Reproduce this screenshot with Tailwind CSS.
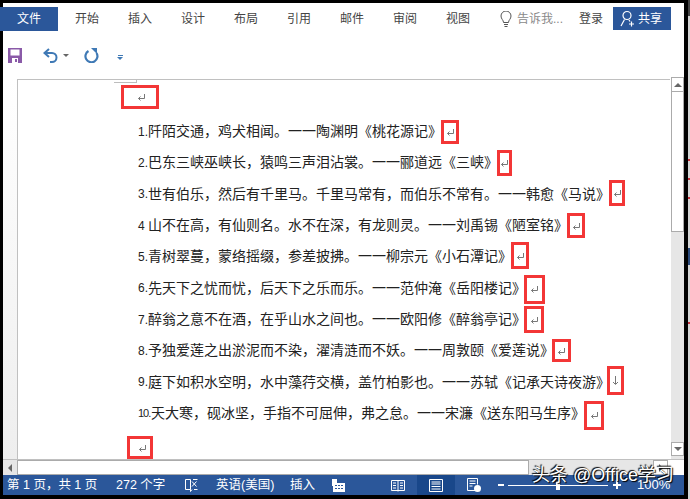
<!DOCTYPE html>
<html lang="zh-CN">
<head>
  <meta charset="UTF-8" />
  <title>文档 - Word</title>
  <script src="https://cdn.jsdelivr.net/npm/@tailwindcss/browser@4"></script>
</head>
<body class="bg-black w-[690px] h-[499px] overflow-hidden font-['Liberation_Sans','Noto_Sans_CJK_SC',sans-serif]">
  <div class="flex justify-between">
  <div class="relative ml-[3px] mt-[3px] w-[681px] h-[492px] bg-white flex flex-col">

    <!-- tabs -->
    <div class="h-[28px] pt-[4px] flex items-stretch text-[12px] text-[#444]">
      <div class="-ml-[3px] w-[58px] h-[24px] bg-[#2b579a] text-white flex items-center justify-center">文件</div>
      <div class="ml-[3px] w-[53px] pl-[14px] flex items-center">开始</div>
      <div class="w-[53px] pl-[14px] flex items-center">插入</div>
      <div class="w-[53px] pl-[14px] flex items-center">设计</div>
      <div class="w-[53px] pl-[14px] flex items-center">布局</div>
      <div class="w-[53px] pl-[14px] flex items-center">引用</div>
      <div class="w-[53px] pl-[14px] flex items-center">邮件</div>
      <div class="w-[53px] pl-[14px] flex items-center">审阅</div>
      <div class="w-[53px] pl-[14px] flex items-center">视图</div>
      <div class="ml-[15px] flex items-center w-[79px]">
        <svg width="12" height="17" viewBox="0 0 12 17" fill="none" stroke="#555" stroke-width="1"><path d="M3.500 11.500C3.500 9 1 8 1 5a5 5 0 0 1 10 0c0 3-2.500 4-2.500 6.500z"/><path d="M4 13.500h4M4.500 15.500h3"/></svg>
        <span class="ml-[5px] text-[#8a8a8a] whitespace-nowrap">告诉我...</span>
      </div>
      <div class="w-[34px] flex items-center whitespace-nowrap">登录</div>
      <div class="w-[58px] h-[23px] bg-[#2b579a] text-white flex items-center pl-[7px] gap-[3px]">
        <svg width="15" height="17" viewBox="0 0 15 17" fill="none" stroke="#fff" stroke-width="1.200"><circle cx="7" cy="5.500" r="4"/><path d="M4.500 9.500 1 16M9 10l1 1.500M9 14h5M11.500 11.500v5"/></svg>
        <span>共享</span>
      </div>
    </div>

    <!-- quick access -->
    <div class="h-[48px] flex items-center pt-[1px]">
      <svg class="ml-[5px]" width="14" height="15" viewBox="0 0 14 15"><path fill="#8a5aa8" d="M0 0h14v15H0z"/><path fill="#fff" d="M2.500 1.500h9v6h-9zM4 10h6v5H4z"/><path fill="#8a5aa8" d="M7 11h2v3H7z"/></svg>
      <svg class="ml-[21px]" width="15" height="15" viewBox="0 0 15 15" fill="none" stroke="#3f79b5" stroke-width="2"><path d="M6 1 1.500 5 6 9"/><path d="M2 5h7a4.500 4.500 0 0 1 0 9H7"/></svg>
      <span class="ml-[5px] w-0 h-0 border-x-[3px] border-x-transparent border-t-[3px] border-t-[#666]"></span>
      <svg class="ml-[15px]" width="15" height="15" viewBox="0 0 15 15" fill="none" stroke="#3f79b5" stroke-width="2.200"><path d="M4.500 3a6 6 0 1 0 8 2"/><path fill="#3f79b5" stroke="none" d="M7 0h6v6z"/></svg>
      <span class="ml-[18px] flex flex-col items-center gap-[1px] mt-[4px]">
        <span class="w-[5px] h-px bg-[#3f79b5]"></span>
        <span class="w-0 h-0 border-x-[3px] border-x-transparent border-t-[3px] border-t-[#3f79b5]"></span>
      </span>
    </div>

    <!-- document + vertical scrollbar -->
    <div class="flex h-[380px]">
      <div class="w-[15px] bg-linear-to-b from-white to-[#eeeeee] border-r border-[#c0c0c0]"></div>
      <div class="relative w-[652px] border-t border-[#c0c0c0] bg-white">
        <div class="absolute left-[96px] top-0 w-[23px] h-[3px] border-b border-r border-[#bdbdbd]"></div>
        <div class="ml-[103px] mt-[5px] w-[38px] h-[24px] border-[3px] border-[#f33636] flex items-center justify-center"><svg class="mt-[2px] ml-[3px]" width="9" height="8" viewBox="0 0 9 8" fill="none" stroke="#777"><path d="M7.500 0v4.500H1.500M3.500 2.500 1.500 4.500l2 2"/></svg></div>

        <div class="mt-[7px] pl-[120px] text-[14px] text-[#222] flex flex-col">
          <div class="h-[31.33px] flex items-center whitespace-nowrap"><span class="w-[10px] text-[12px]">1.</span>阡陌交通，鸡犬相闻。一一陶渊明《桃花源记》<span class="-ml-[1px] w-[18px] h-[24px] border-[3px] border-[#f33636] flex items-center justify-center"><svg class="mt-[2px]" width="9" height="8" viewBox="0 0 9 8" fill="none" stroke="#777"><path d="M7.500 0v4.500H1.500M3.500 2.500 1.500 4.500l2 2"/></svg></span></div>
          <div class="h-[31.33px] flex items-center whitespace-nowrap"><span class="w-[10px] text-[12px]">2.</span>巴东三峡巫峡长，猿鸣三声泪沾裳。一一郦道远《三峡》<span class="-ml-[1px] w-[15px] h-[26px] border-[3px] border-[#f33636] flex items-center justify-center"><svg class="mt-[2px]" width="9" height="8" viewBox="0 0 9 8" fill="none" stroke="#777"><path d="M7.500 0v4.500H1.500M3.500 2.500 1.500 4.500l2 2"/></svg></span></div>
          <div class="h-[31.33px] flex items-center whitespace-nowrap"><span class="w-[10px] text-[12px]">3.</span>世有伯乐，然后有千里马。千里马常有，而伯乐不常有。一一韩愈《马说》<span class="-ml-[1px] mb-[2px] w-[16px] h-[26px] border-[3px] border-[#f33636] flex items-center justify-center"><svg class="mt-[2px]" width="9" height="8" viewBox="0 0 9 8" fill="none" stroke="#777"><path d="M7.500 0v4.500H1.500M3.500 2.500 1.500 4.500l2 2"/></svg></span></div>
          <div class="h-[31.33px] flex items-center whitespace-nowrap"><span class="w-[10px] text-[12px]">4</span>山不在高，有仙则名。水不在深，有龙则灵。一一刘禹锡《陋室铭》<span class="-ml-[1px] w-[18px] h-[25px] border-[3px] border-[#f33636] flex items-center justify-center"><svg class="mt-[2px]" width="9" height="8" viewBox="0 0 9 8" fill="none" stroke="#777"><path d="M7.500 0v4.500H1.500M3.500 2.500 1.500 4.500l2 2"/></svg></span></div>
          <div class="h-[31.33px] flex items-center whitespace-nowrap"><span class="w-[10px] text-[12px]">5.</span>青树翠蔓，蒙络摇缀，参差披拂。一一柳宗元《小石潭记》<span class="-ml-[1px] mb-[2px] w-[18px] h-[27px] border-[3px] border-[#f33636] flex items-center justify-center"><svg class="mt-[2px]" width="9" height="8" viewBox="0 0 9 8" fill="none" stroke="#777"><path d="M7.500 0v4.500H1.500M3.500 2.500 1.500 4.500l2 2"/></svg></span></div>
          <div class="h-[31.33px] flex items-center whitespace-nowrap"><span class="w-[10px] text-[12px]">6.</span>先天下之忧而忧，后天下之乐而乐。一一范仲淹《岳阳楼记》<span class="-ml-[2px] mt-[2px] w-[21px] h-[29px] border-[3px] border-[#f33636] flex items-center justify-center"><svg class="mt-[2px]" width="9" height="8" viewBox="0 0 9 8" fill="none" stroke="#777"><path d="M7.500 0v4.500H1.500M3.500 2.500 1.500 4.500l2 2"/></svg></span></div>
          <div class="h-[31.33px] flex items-center whitespace-nowrap"><span class="w-[10px] text-[12px]">7.</span>醉翁之意不在酒，在乎山水之间也。一一欧阳修《醉翁亭记》<span class="-ml-[2px] w-[20px] h-[27px] border-[3px] border-[#f33636] flex items-center justify-center"><svg class="mt-[2px]" width="9" height="8" viewBox="0 0 9 8" fill="none" stroke="#777"><path d="M7.500 0v4.500H1.500M3.500 2.500 1.500 4.500l2 2"/></svg></span></div>
          <div class="h-[31.33px] flex items-center whitespace-nowrap"><span class="w-[10px] text-[12px]">8.</span>予独爱莲之出淤泥而不染，濯清涟而不妖。一一周敦颐《爱莲说》<span class="-ml-[2px] w-[19px] h-[23px] border-[3px] border-[#f33636] flex items-center justify-center"><svg class="mt-[2px]" width="9" height="8" viewBox="0 0 9 8" fill="none" stroke="#777"><path d="M7.500 0v4.500H1.500M3.500 2.500 1.500 4.500l2 2"/></svg></span></div>
          <div class="h-[31.33px] flex items-center whitespace-nowrap"><span class="w-[10px] text-[12px]">9.</span>庭下如积水空明，水中藻荇交横，盖竹柏影也。一一苏轼《记承天诗夜游》<span class="-ml-[3px] mb-[3px] w-[17px] h-[29px] border-[3px] border-[#f33636] flex items-center justify-center"><svg width="7" height="10" viewBox="0 0 7 10" fill="none" stroke="#777"><path d="M3.500 0v8M1 6l2.500 2.500L6 6"/></svg></span></div>
          <div class="h-[31.33px] flex items-center whitespace-nowrap"><span class="w-[13px] text-[11px] tracking-[-1px]">10.</span>天大寒，砚冰坚，手指不可屈伸，弗之怠。一一宋濂《送东阳马生序》<span class="-ml-[1px] mt-[3px] w-[20px] h-[29px] border-[3px] border-[#f33636] flex items-center justify-center"><svg class="mt-[2px]" width="9" height="8" viewBox="0 0 9 8" fill="none" stroke="#777"><path d="M7.500 0v4.500H1.500M3.500 2.500 1.500 4.500l2 2"/></svg></span></div>
        </div>

        <div class="ml-[109px] mt-[7px] w-[26px] h-[23px] border-[3px] border-[#f33636] flex items-center justify-center"><svg class="mt-[2px] ml-[4px]" width="9" height="8" viewBox="0 0 9 8" fill="none" stroke="#777"><path d="M7.500 0v4.500H1.500M3.500 2.500 1.500 4.500l2 2"/></svg></div>
      </div>
      <div class="w-[13px] bg-[#e6e6e6] flex flex-col -mt-[2px] ml-px">
        <div class="h-[15px] bg-white border border-[#ababab] flex items-center justify-center"><span class="w-0 h-0 border-x-[4px] border-x-transparent border-b-[4px] border-b-[#666]"></span></div>
        <div class="h-[140px] bg-white border-x border-b border-[#ababab]"></div>
        <div class="flex-1"></div>
        <div class="h-[14px] mb-[3px] bg-white border border-[#ababab] flex items-center justify-center"><span class="w-0 h-0 border-x-[4px] border-x-transparent border-t-[4px] border-t-[#666]"></span></div>
      </div>
    </div>

    <!-- horizontal scrollbar -->
    <div class="h-[16px] flex bg-[#e6e6e6] border-t border-[#c0c0c0]">
      <div class="w-[14px] flex items-center justify-center"><span class="w-0 h-0 border-y-[4px] border-y-transparent border-r-[4px] border-r-[#666]"></span></div>
      <div class="w-[512px] bg-white border border-[#ababab]"></div>
      <div class="flex-1"></div>
      <div class="w-[15px] bg-white border border-[#ababab] flex items-center justify-center"><span class="w-0 h-0 border-y-[4px] border-y-transparent border-l-[4px] border-l-[#666]"></span></div>
      <div class="w-[16px] bg-white"></div>
    </div>

    <!-- status bar -->
    <div class="h-[20px] bg-[#2b579a] text-white text-[12.5px] flex items-center whitespace-nowrap">
      <span class="ml-[4px] w-[109px]">第 1 页，共 1 页</span>
      <span class="w-[68px]">272 个字</span>
      <svg width="14" height="14" viewBox="0 0 14 14" fill="none" stroke="#fff"><path d="M6.500 1.500h-5v10h5v2l1.500-2M6.500 1.500v10"/><path d="M8 3.500l4.500 5M12.500 3.500 8 8.500M9 1.500h4.500M13.500 11.500H10"/></svg>
      <span class="ml-[18px] w-[74px]">英语(美国)</span>
      <span class="w-[42px]">插入</span>
      <svg width="13" height="13" viewBox="0 0 13 13"><path fill="#fff" d="M0 0h5v4h8v9H1V7H0zM3 6v1h2V6zm3 0v1h2V6zm3 0v1h2V6zM3 9v1h2V9zm3 0v1h2V9zm3 0v1h2V9z"/></svg>
      <svg class="ml-[46px]" width="14" height="13" viewBox="0 0 14 13" fill="none" stroke="#fff"><path d="M7 1.500v11M.5 1.500H7h6.500v10H.5zM2 4h3M2 6.500h3M2 9h3M9 4h3M9 6.500h3M9 9h3"/></svg>
      <span class="ml-[12px] w-[38px] h-[20px] bg-[#19478a] flex items-center justify-center"><svg width="14" height="13" viewBox="0 0 14 13" fill="none" stroke="#fff"><path d="M.5.500h13v12H.5zM2.500 3h9M2.500 5h9M2.500 7.500h9M2.500 10h9"/></svg></span>
      <svg class="ml-[12px]" width="14" height="14" viewBox="0 0 14 14" fill="none" stroke="#fff"><path d="M8 12.500H.5V.5h10v6M2.500 3h6M2.500 5.500h6M2.500 8h3"/><circle cx="10.500" cy="10.500" r="3.500" fill="#fff" stroke="none"/></svg>
      <span class="ml-[17px] w-[6px] h-[2px] bg-white"></span>
      <span class="relative ml-[4px] w-[100px] h-px bg-white"><span class="absolute left-[48px] -top-[4px] w-[4px] h-[9px] bg-white"></span></span>
      <span class="relative ml-[5px] w-[8px] h-[2px] bg-white"><span class="absolute left-[3px] -top-[3px] w-[2px] h-[8px] bg-white"></span></span>
      <span class="ml-[16px] text-[13px]">100%</span>
    </div>

    <!-- watermark -->
    <div class="absolute left-[529px] top-[460px] text-[18px] leading-[24px] text-white whitespace-nowrap [text-shadow:1px_1px_1px_#000,-1px_-1px_1px_#000]">头条 @Office学习</div>
  </div>

  <!-- next window peeking out on the right -->
  <div class="w-[2px] h-[499px] bg-[#d4d4d4] flex flex-col">
    <div class="h-[16px] bg-[#444]"></div>
    <div class="mt-[143px] h-[2px] bg-[#c8323c]"></div>
    <div class="mt-[17px] h-[2px] bg-[#c8323c]"></div>
    <div class="mt-[17px] h-[2px] bg-[#c8323c]"></div>
    <div class="mt-[49px] h-[17px] bg-[#2b4a7a]"></div>
    <div class="mt-[57px] h-[2px] bg-[#c8323c]"></div>
  </div>
  </div>
</body>
</html>
